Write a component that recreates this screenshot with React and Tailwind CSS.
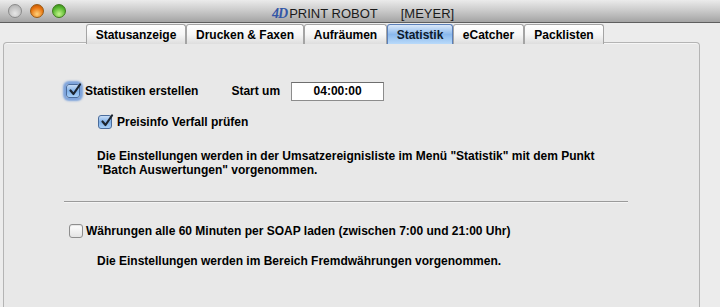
import React from 'react'

const TABS = [
  { label: 'Statusanzeige', w: 'w-[100px]' },
  { label: 'Drucken & Faxen', w: 'w-[118px]' },
  { label: 'Aufräumen', w: 'w-[83px]' },
  { label: 'Statistik', w: 'w-[66px]', active: true },
  { label: 'eCatcher', w: 'w-[71px]' },
  { label: 'Packlisten', w: 'w-[80px]' },
]

function Light({ color }) {
  return <span className={`block w-[14px] h-[14px] rounded-full border ${color}`} />
}

function CheckBox({ checked, focus }) {
  if (!checked) {
    return (
      <span className="block w-[14px] h-[14px] rounded-[3px] border border-[#8e8e8e] bg-gradient-to-b from-white to-[#e4e4e4] shadow-[inset_0_1px_1px_rgba(0,0,0,0.1)]" />
    )
  }
  return (
    <span
      className={`relative block w-[14px] h-[14px] rounded-[3px] border border-[#4a6c9c] bg-gradient-to-b from-[#c7dcf5] via-[#7fb0e8] to-[#a8d0f8] ${
        focus ? 'shadow-[0_0_2px_3px_rgba(90,140,215,0.75)]' : ''
      }`}
    >
      <svg viewBox="0 0 14 14" className="absolute -top-[2px] left-[1px] w-[14px] h-[14px]">
        <path d="M2.5 7.5 L5.5 11 L12 1.5" fill="none" stroke="#1c2530" strokeWidth="2.2" strokeLinecap="round" strokeLinejoin="round" />
      </svg>
    </span>
  )
}

export default function App() {
  return (
    <div className="w-[720px] h-[307px] overflow-hidden bg-[#ececec] text-black" style={{ fontFamily: '"Liberation Sans", Arial, sans-serif' }}>
      {/* title bar */}
      <div className="relative h-[23px] flex items-center border-b border-[#5e5e5e] bg-gradient-to-b from-[#ebebeb] via-[#c9c9c9] to-[#a4a4a4]">
        <div className="flex items-center gap-[8px] pl-[8px]">
          <Light color="border-[#8a8a8a] bg-[radial-gradient(circle_at_50%_70%,#e6e6e6,#a9a9a9)]" />
          <Light color="border-[#9a5a10] bg-[radial-gradient(circle_at_50%_75%,#ffd27a,#e8730e_60%,#b24a05)]" />
          <Light color="border-[#3e7a1c] bg-[radial-gradient(circle_at_50%_75%,#c4f58a,#58b830_60%,#2f7a12)]" />
        </div>
        <div className="absolute left-[272px] top-[3px] flex items-baseline text-[13px] text-[#1a1a1a]">
          <span className="text-[#3356a6] font-bold italic text-[14px] tracking-[-1px] mr-[2px]" style={{ fontFamily: '"Liberation Serif", serif' }}>4D</span>
          <span>PRINT ROBOT</span>
          <span className="ml-[23px]">[MEYER]</span>
        </div>
      </div>

      {/* tabs */}
      <div className="relative z-10 flex h-[20px] pl-[86px] text-[12px] font-bold">
        {TABS.map((t) => (
          <div
            key={t.label}
            className={`${t.w} h-[20px] mt-[1px] flex items-center justify-center rounded-t-[3px] border border-b-0 ${
              t.active
                ? 'border-[#5b7fb8] bg-gradient-to-b from-[#dbe8f8] via-[#8ab8ec] to-[#b9dafa] text-[#0e1a2c]'
                : 'border-[#a4a4a4] bg-gradient-to-b from-white via-[#f6f6f6] to-[#dedede]'
            }`}
          >
            {t.label}
          </div>
        ))}
      </div>

      {/* panel */}
      <div className="ml-[3px] w-[697px] h-[300px] -mt-[1px] rounded-t-[4px] border-t border-l border-r border-[#b4b4b4] bg-[#e8e8e8] shadow-[inset_0_1px_0_#f6f6f6] text-[12px] font-bold">
        <div className="pt-[40px] pl-[62px]">
          <div className="flex items-center h-[16px]">
            <CheckBox checked focus />
            <span className="ml-[5px]">Statistiken erstellen</span>
            <span className="ml-[33px]">Start um</span>
            <div className="ml-[11px] w-[93px] h-[19px] border border-[#8c8c8c] border-t-[#6e6e6e] bg-white flex items-center justify-center">
              04:00:00
            </div>
          </div>

          <div className="flex items-center h-[16px] mt-[15px] pl-[32px]">
            <CheckBox checked />
            <span className="ml-[5px]">Preisinfo Verfall prüfen</span>
          </div>

          <div className="mt-[19px] pl-[31px] leading-[14px]">
            <div>Die Einstellungen werden in der Umsatzereignisliste im Menü "Statistik" mit dem Punkt</div>
            <div>"Batch Auswertungen" vorgenommen.</div>
          </div>

          <div className="mt-[24px] -ml-[2px] w-[564px] h-[2px] border-t border-[#9a9a9a] border-b border-b-[#f4f4f4]" />

          <div className="flex items-center h-[16px] mt-[20px] pl-[3px]">
            <CheckBox />
            <span className="ml-[3px]">Währungen alle 60 Minuten per SOAP laden (zwischen 7:00 und 21:00 Uhr)</span>
          </div>

          <div className="mt-[13px] pl-[31px]">Die Einstellungen werden im Bereich Fremdwährungen vorgenommen.</div>
        </div>
      </div>
    </div>
  )
}
